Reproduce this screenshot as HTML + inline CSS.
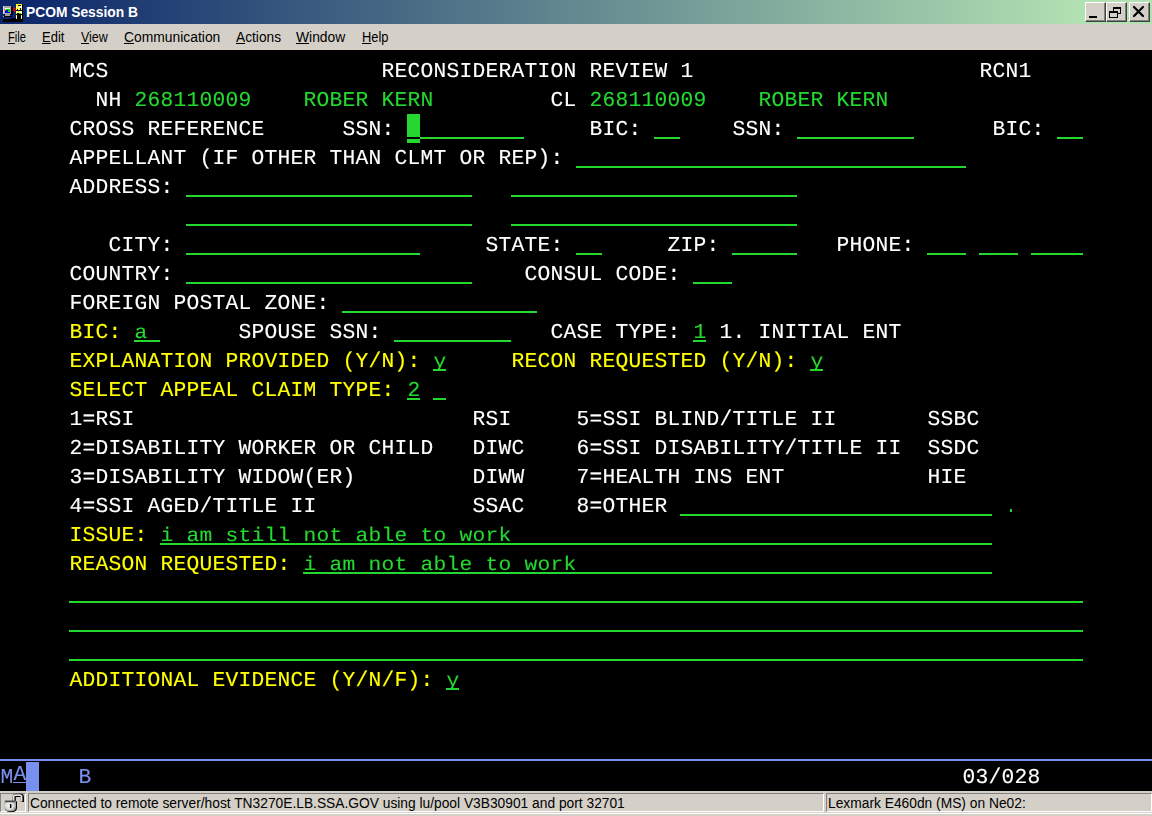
<!DOCTYPE html>
<html><head><meta charset="utf-8"><title>PCOM Session B</title>
<style>
html,body{margin:0;padding:0;}
body{width:1152px;height:816px;position:relative;overflow:hidden;background:#d4d0c8;font-family:"Liberation Sans",sans-serif;}
#title{position:absolute;left:0;top:0;width:1152px;height:24px;background:linear-gradient(to right,#0a246a 0px,#b2e2b2 1085px);}
#title .cap{position:absolute;left:26px;top:4px;color:#fff;font-weight:bold;font-size:13.8px;line-height:18px;white-space:nowrap;}
.wb{position:absolute;top:2px;height:20px;width:21px;background:#d4d0c8;box-sizing:border-box;border:1px solid;border-color:#fff #404040 #404040 #fff;box-shadow:inset -1px -1px 0 #808080;}
.wb svg{position:absolute;left:-1px;top:-1px;}
#menu{position:absolute;left:0;top:24px;width:1152px;height:26px;background:#d4d0c8;}
#menu span{position:absolute;transform-origin:0 0;top:5px;font-size:14px;line-height:16px;color:#000;white-space:nowrap;}
#menu u{text-decoration:underline;text-underline-offset:1px;}
#term{position:absolute;left:0;top:0px;width:1152px;height:791px;will-change:transform;}
#tbg{position:absolute;left:0;top:50px;width:1152px;height:741px;background:#000;}
.t{position:absolute;font-family:"Liberation Mono",monospace;font-size:21.25px;letter-spacing:0.248px;line-height:29px;height:29px;white-space:pre;text-rendering:geometricPrecision;margin-top:2px;margin-left:0.5px;-webkit-text-stroke:0.12px;}
.lc{transform-origin:0 19px;transform:scaleY(0.92);}
.w{color:#fff}.g{color:#24d830}.y{color:#ffff00}.b{color:#7890f0}
.u{position:absolute;height:2px;background:#24d830;}
#status{position:absolute;left:0;top:791px;width:1152px;height:25px;background:#d4d0c8;}
.pn span{position:absolute;top:1px;transform-origin:0 0;}
.pn{position:absolute;top:2px;height:19px;box-sizing:border-box;border:1px solid;border-color:#808080 #fff #fff #808080;font-size:14px;line-height:17px;color:#000;white-space:nowrap;overflow:hidden;}
</style></head><body>
<div id="title">
<svg style="position:absolute;left:0;top:0" width="26" height="24" viewBox="0 0 26 24" shape-rendering="crispEdges">
<rect x="3" y="19" width="20" height="3" fill="#000"/>
<rect x="11" y="18" width="6" height="1" fill="#000"/>
<rect x="4" y="7" width="9" height="8" fill="#000"/>
<rect x="3" y="6" width="8.3" height="8.3" fill="#a8a8a8"/>
<rect x="3" y="6" width="1" height="8.3" fill="#dcdcdc"/>
<rect x="5" y="8" width="5" height="5" fill="#0000ff"/>
<rect x="5" y="8" width="5" height="1" fill="#ffffff"/>
<rect x="6" y="9" width="4" height="1" fill="#00e000"/>
<rect x="8" y="10" width="2" height="2" fill="#00e000"/>
<rect x="5" y="9" width="1" height="1" fill="#ffe000"/>
<rect x="5" y="10" width="1" height="1" fill="#ff2000"/>
<rect x="5" y="14" width="5" height="2" fill="#a0a0a0"/>
<rect x="3" y="16" width="9" height="1" fill="#000"/>
<rect x="3" y="16" width="1" height="1" fill="#c0c0c0"/>
<path d="M12 10.5h1.2l0.8-3 0.8 4.5 0.8-3.5h1" stroke="#ff0000" stroke-width="0.8" fill="none" shape-rendering="auto"/>
<rect x="16" y="4" width="6.5" height="15" fill="#000"/>
<rect x="16" y="4" width="6" height="2" fill="#ffff00"/>
<rect x="18" y="5" width="3" height="1" fill="#000"/>
<rect x="16" y="6" width="6" height="2" fill="#ffffff"/>
<rect x="17" y="6" width="2" height="2" fill="#ffff00"/>
<rect x="16" y="8" width="6" height="2" fill="#ffff00"/>
<rect x="18" y="8" width="1" height="2" fill="#ffffff"/>
<rect x="20" y="8" width="1" height="2" fill="#000"/>
<rect x="17" y="9" width="1" height="1" fill="#000"/>
<rect x="16" y="11" width="6" height="2" fill="#ffffff"/>
<rect x="17" y="11" width="2" height="2" fill="#ffff00"/>
<rect x="16" y="13" width="6" height="1" fill="#ffff00"/>
<rect x="17" y="13" width="2" height="1" fill="#000"/>
<rect x="19" y="13" width="2" height="1" fill="#00e000"/>
<rect x="16" y="15" width="1.2" height="4" fill="#ffffff"/>
<rect x="16" y="15" width="1.2" height="1" fill="#ffff00"/>
<rect x="16" y="18" width="1.2" height="1" fill="#ffff00"/>
<rect x="21" y="15" width="1.2" height="4" fill="#ffffff"/>
<rect x="21" y="15" width="1.2" height="1" fill="#ffff00"/>
<rect x="21" y="18" width="1.2" height="1" fill="#ffff00"/>
</svg>
<div class="cap">PCOM Session B</div>
<div class="wb" style="left:1085px"><svg width="21" height="20" viewBox="0 0 21 20" shape-rendering="crispEdges"><rect x="4" y="14" width="8" height="2" fill="#000"/></svg></div>
<div class="wb" style="left:1106px"><svg width="21" height="20" viewBox="0 0 21 20" shape-rendering="crispEdges"><rect x="7" y="5" width="8" height="2" fill="#000"/><rect x="14" y="5" width="1" height="7" fill="#000"/><rect x="12" y="11" width="3" height="1" fill="#000"/><rect x="7" y="5" width="1" height="4" fill="#000"/><rect x="3" y="9" width="9" height="2" fill="#000"/><rect x="3" y="9" width="1" height="7" fill="#000"/><rect x="11" y="9" width="1" height="7" fill="#000"/><rect x="3" y="15" width="9" height="1" fill="#000"/></svg></div>
<div class="wb" style="left:1129px"><svg width="21" height="20" viewBox="0 0 21 20"><path d="M5 5L14 14M14 5L5 14" stroke="#000" stroke-width="2.2" stroke-linecap="round" fill="none"/></svg></div>
</div>
<div id="menu">
<span style="left:8px;transform:scaleX(0.80)"><u>F</u>ile</span>
<span style="left:42px;transform:scaleX(0.93)"><u>E</u>dit</span>
<span style="left:81px;transform:scaleX(0.89)"><u>V</u>iew</span>
<span style="left:124px;transform:scaleX(0.99)"><u>C</u>ommunication</span>
<span style="left:236px;transform:scaleX(0.98)"><u>A</u>ctions</span>
<span style="left:296px;transform:scaleX(0.99)"><u>W</u>indow</span>
<span style="left:362px;transform:scaleX(0.92)"><u>H</u>elp</span>
</div>
<div id="term"><div id="tbg"></div>
<div class="t w" style="left:69px;top:56px">MCS</div>
<div class="t w" style="left:381px;top:56px">RECONSIDERATION REVIEW 1</div>
<div class="t w" style="left:979px;top:56px">RCN1</div>
<div class="t w" style="left:95px;top:85px">NH</div>
<div class="t g" style="left:134px;top:85px">268110009</div>
<div class="t g" style="left:303px;top:85px">ROBER KERN</div>
<div class="t w" style="left:550px;top:85px">CL</div>
<div class="t g" style="left:589px;top:85px">268110009</div>
<div class="t g" style="left:758px;top:85px">ROBER KERN</div>
<div class="t w" style="left:69px;top:114px">CROSS REFERENCE</div>
<div class="t w" style="left:342px;top:114px">SSN:</div>
<div class="t w" style="left:589px;top:114px">BIC:</div>
<div class="t w" style="left:732px;top:114px">SSN:</div>
<div class="t w" style="left:992px;top:114px">BIC:</div>
<div class="t w" style="left:69px;top:143px">APPELLANT (IF OTHER THAN CLMT OR REP):</div>
<div class="t w" style="left:69px;top:172px">ADDRESS:</div>
<div class="t w" style="left:108px;top:230px">CITY:</div>
<div class="t w" style="left:485px;top:230px">STATE:</div>
<div class="t w" style="left:667px;top:230px">ZIP:</div>
<div class="t w" style="left:836px;top:230px">PHONE:</div>
<div class="t w" style="left:69px;top:259px">COUNTRY:</div>
<div class="t w" style="left:524px;top:259px">CONSUL CODE:</div>
<div class="t w" style="left:69px;top:288px">FOREIGN POSTAL ZONE:</div>
<div class="t y" style="left:69px;top:317px">BIC:</div>
<div class="t g lc" style="left:134px;top:317px">a</div>
<div class="t w" style="left:238px;top:317px">SPOUSE SSN:</div>
<div class="t w" style="left:550px;top:317px">CASE TYPE:</div>
<div class="t g" style="left:693px;top:317px">1</div>
<div class="t w" style="left:719px;top:317px">1. INITIAL ENT</div>
<div class="t y" style="left:69px;top:346px">EXPLANATION PROVIDED (Y/N):</div>
<div class="t g lc" style="left:433px;top:346px">y</div>
<div class="t y" style="left:511px;top:346px">RECON REQUESTED (Y/N):</div>
<div class="t g lc" style="left:810px;top:346px">y</div>
<div class="t y" style="left:69px;top:375px">SELECT APPEAL CLAIM TYPE:</div>
<div class="t g" style="left:407px;top:375px">2</div>
<div class="t w" style="left:69px;top:404px">1=RSI</div>
<div class="t w" style="left:472px;top:404px">RSI</div>
<div class="t w" style="left:576px;top:404px">5=SSI BLIND/TITLE II</div>
<div class="t w" style="left:927px;top:404px">SSBC</div>
<div class="t w" style="left:69px;top:433px">2=DISABILITY WORKER OR CHILD</div>
<div class="t w" style="left:472px;top:433px">DIWC</div>
<div class="t w" style="left:576px;top:433px">6=SSI DISABILITY/TITLE II</div>
<div class="t w" style="left:927px;top:433px">SSDC</div>
<div class="t w" style="left:69px;top:462px">3=DISABILITY WIDOW(ER)</div>
<div class="t w" style="left:472px;top:462px">DIWW</div>
<div class="t w" style="left:576px;top:462px">7=HEALTH INS ENT</div>
<div class="t w" style="left:927px;top:462px">HIE</div>
<div class="t w" style="left:69px;top:491px">4=SSI AGED/TITLE II</div>
<div class="t w" style="left:472px;top:491px">SSAC</div>
<div class="t w" style="left:576px;top:491px">8=OTHER</div>
<div class="t y" style="left:69px;top:520px">ISSUE:</div>
<div class="t g lc" style="left:160px;top:520px">i am still not able to work</div>
<div class="t y" style="left:69px;top:549px">REASON REQUESTED:</div>
<div class="t g lc" style="left:303px;top:549px">i am not able to work</div>
<div class="t y" style="left:69px;top:665px">ADDITIONAL EVIDENCE (Y/N/F):</div>
<div class="t g lc" style="left:446px;top:665px">y</div>
<div class="u" style="left:420px;top:137px;width:104px"></div>
<div class="u" style="left:654px;top:137px;width:26px"></div>
<div class="u" style="left:797px;top:137px;width:117px"></div>
<div class="u" style="left:1057px;top:137px;width:26px"></div>
<div class="u" style="left:576px;top:166px;width:390px"></div>
<div class="u" style="left:186px;top:195px;width:286px"></div>
<div class="u" style="left:511px;top:195px;width:286px"></div>
<div class="u" style="left:186px;top:224px;width:286px"></div>
<div class="u" style="left:511px;top:224px;width:286px"></div>
<div class="u" style="left:186px;top:253px;width:234px"></div>
<div class="u" style="left:576px;top:253px;width:26px"></div>
<div class="u" style="left:732px;top:253px;width:65px"></div>
<div class="u" style="left:927px;top:253px;width:39px"></div>
<div class="u" style="left:979px;top:253px;width:39px"></div>
<div class="u" style="left:1031px;top:253px;width:52px"></div>
<div class="u" style="left:186px;top:282px;width:286px"></div>
<div class="u" style="left:693px;top:282px;width:39px"></div>
<div class="u" style="left:342px;top:311px;width:195px"></div>
<div class="u" style="left:134px;top:340px;width:26px"></div>
<div class="u" style="left:394px;top:340px;width:117px"></div>
<div class="u" style="left:693px;top:340px;width:13px"></div>
<div class="u" style="left:433px;top:369px;width:13px"></div>
<div class="u" style="left:810px;top:369px;width:13px"></div>
<div class="u" style="left:407px;top:398px;width:13px"></div>
<div class="u" style="left:433px;top:398px;width:13px"></div>
<div class="u" style="left:680px;top:514px;width:312px"></div>
<div class="u" style="left:160px;top:543px;width:832px"></div>
<div class="u" style="left:303px;top:572px;width:689px"></div>
<div class="u" style="left:69px;top:601px;width:1014px"></div>
<div class="u" style="left:69px;top:630px;width:1014px"></div>
<div class="u" style="left:69px;top:659px;width:1014px"></div>
<div class="u" style="left:446px;top:688px;width:13px"></div>
<div class="u" style="left:1010px;top:509px;width:2px;height:3px"></div>
<!-- cursor -->
<div style="position:absolute;left:407px;top:114px;width:13px;height:29px;background:#24d830"></div>
<div style="position:absolute;left:407px;top:137px;width:13px;height:2px;background:#000"></div>
<!-- OIA -->
<div style="position:absolute;left:0;top:759px;width:1152px;height:2px;background:#7890f0"></div>
<div class="t b" style="left:0px;top:762px">M</div>
<div class="t b" style="left:13px;top:759px">A</div>
<div style="position:absolute;left:13px;top:782px;width:13px;height:1px;background:#7890f0"></div>
<div style="position:absolute;left:26px;top:762px;width:13px;height:29px;background:#7890f0"></div>
<div class="t b" style="left:78px;top:762px">B</div>
<div class="t w" style="left:962px;top:762px">03/028</div>
</div>
<div id="status">
<div style="position:absolute;left:0;top:22px;width:1152px;height:1px;background:#fff"></div>
<div class="pn" style="left:0px;width:26px"></div>
<div class="pn" style="left:28px;width:796px"><span style="left:0.5px;transform:scaleX(0.984)">Connected to remote server/host TN3270E.LB.SSA.GOV using lu/pool V3B30901 and port 32701</span></div>
<div class="pn" style="left:826px;width:326px"><span style="left:0.5px;transform:scaleX(0.985)">Lexmark E460dn (MS) on Ne02:</span></div>
<svg style="position:absolute;left:0;top:0" width="28" height="25" viewBox="0 0 28 25">
<defs><radialGradient id="lg" cx="0.45" cy="0.45" r="0.6"><stop offset="0" stop-color="#ffffff"/><stop offset="0.6" stop-color="#d8d8d8"/><stop offset="1" stop-color="#8c8c8c"/></radialGradient></defs>
<path d="M14.2 10.5V6.2q0-1.8 1.8-1.8h4.6q1.8 0 1.8 1.8V11" stroke="#000" stroke-width="3.2" fill="none"/>
<path d="M13.6 10.5V6q0-1.8 1.8-1.8h4.4q1.8 0 1.8 1.8V10.6" stroke="#e4e4e4" stroke-width="1.7" fill="none"/>
<path d="M5.6 10.2h10.6q0.8 0 0.8 0.8v5.6q0 4.4-4.6 4.4h-2.6q-4.6 0-4.6-4.4v-5.6q0-0.8 0.4-0.8z" fill="#000"/>
<path d="M4.8 9.8h10.4q0.8 0 0.8 0.8v5.4q0 4.2-4.4 4.2h-2.8q-4.4 0-4.4-4.2v-5.4q0-0.8 0.4-0.8z" fill="url(#lg)"/>
<path d="M5.2 9.6h9.4v1.6h-9.4z" fill="#404040"/>
<rect x="9.9" y="13" width="1.5" height="4" rx="0.6" fill="#000"/>
</svg>
</div>
</body></html>
